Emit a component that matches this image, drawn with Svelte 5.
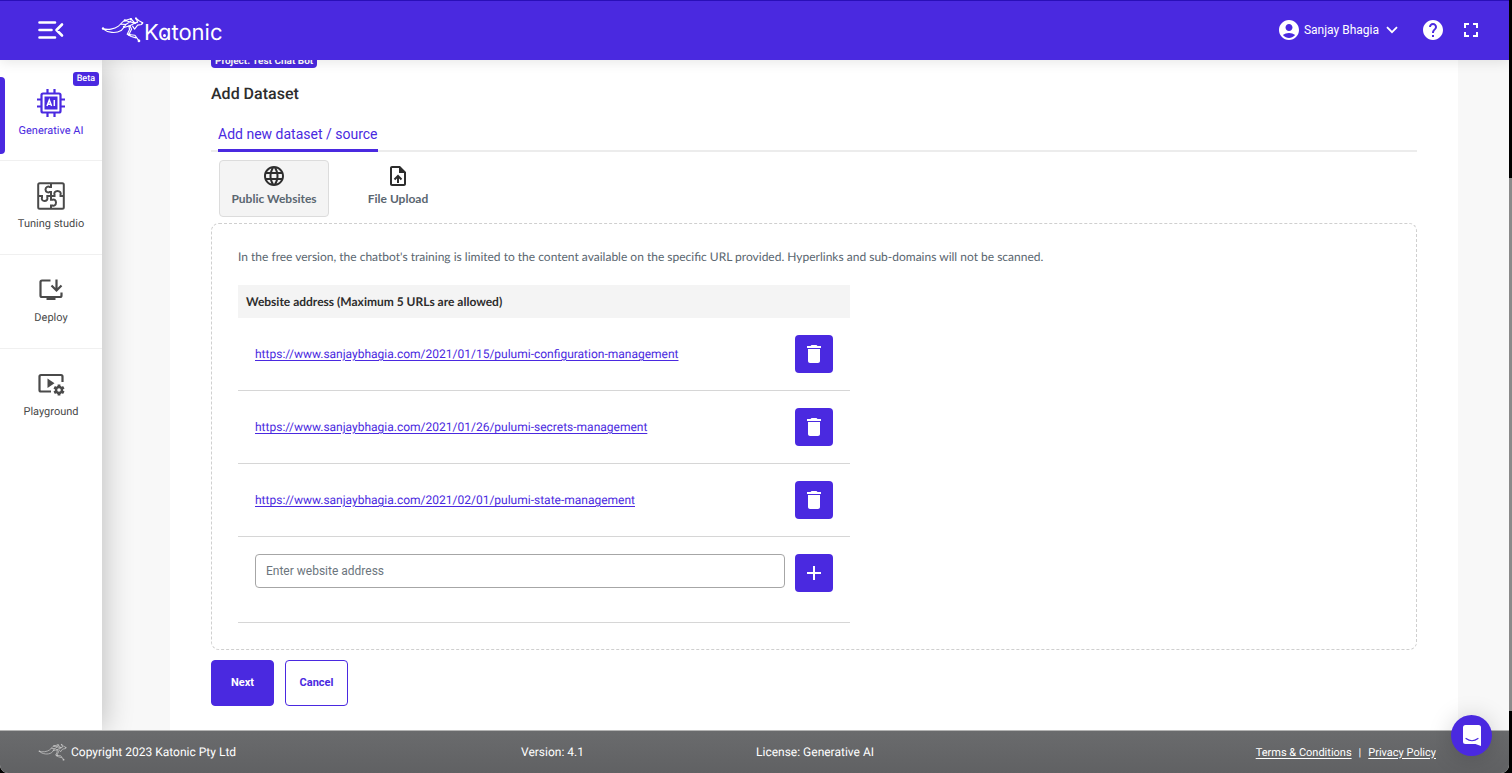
<script>
  let address = $state('');
  let urls = $state([
    'https://www.sanjaybhagia.com/2021/01/15/pulumi-configuration-management',
    'https://www.sanjaybhagia.com/2021/01/26/pulumi-secrets-management',
    'https://www.sanjaybhagia.com/2021/02/01/pulumi-state-management'
  ]);

  function addUrl() {
    if (address.trim() && urls.length < 5) {
      urls.push(address.trim());
      address = '';
    }
  }
</script>

{#snippet kangaroo()}
  <svg class="kangaroo" viewBox="18 18 128 80" fill="none" stroke="currentColor" stroke-linecap="round" stroke-linejoin="round" aria-hidden="true">
    <path stroke-width="3.4" d="M23 55C38 60 58 57 70 48C78 42 80 34 89 31L107 26L119 39L103 35L89 31M24 56C38 68 62 71 78 61L86 52L104 47L119 39M78 42L92 43L107 33M92 43L86 52" />
    <path stroke-width="3.4" d="M119 39L127 36L122 24L131 32L142 38L139 43L127 45L118 57L112 48M104 47L109 57L101 73L119 75L131 92M101 47L103 58L96 72L108 79L122 83" />
    <g fill="currentColor" stroke="none">
      <circle cx="24" cy="55" r="3.5" /><circle cx="89" cy="31" r="3.5" /><circle cx="107" cy="27" r="3.5" />
      <circle cx="86" cy="50" r="3" /><circle cx="119" cy="39" r="3" /><circle cx="122" cy="25" r="3" />
      <circle cx="141" cy="39" r="3" /><circle cx="102" cy="73" r="4" /><circle cx="131" cy="92" r="4" />
    </g>
  </svg>
{/snippet}

<div class="desktop">
  <div class="window">
    <header>
      <button class="icon-btn menu" aria-label="Collapse menu">
        <svg width="26" height="18" viewBox="0 0 26 18" fill="none" stroke="#fff" stroke-width="2.6" stroke-linecap="round" stroke-linejoin="round">
          <path d="M1.5 1.5H17M1.5 9H13.5M1.5 16.500H17M24 3.500L18.500 9L24 14.500" />
        </svg>
      </button>
      <a class="brand" href="#home">
        {@render kangaroo()}
        <span class="wordmark">K<span class="dotted">a</span>tonic</span>
      </a>
      <button class="icon-btn user">
        <svg width="20" height="20" viewBox="2 2 20 20" fill="#fff"><path d="M12 2C6.480 2 2 6.480 2 12s4.480 10 10 10 10-4.480 10-10S17.520 2 12 2zm0 4c1.930 0 3.500 1.570 3.500 3.500S13.930 13 12 13s-3.500-1.570-3.500-3.500S10.070 6 12 6zm0 14c-2.030 0-4.430-.82-6.140-2.880C7.550 15.800 9.680 15 12 15s4.450.8 6.140 2.120C16.430 19.180 14.030 20 12 20z" /></svg>
        <span>Sanjay Bhagia</span>
        <svg width="12" height="8" viewBox="0 0 12 8" fill="none" stroke="#fff" stroke-width="1.800"><path d="M1 1.200L6 6.200L11 1.200" /></svg>
      </button>
      <button class="icon-btn" aria-label="Help">
        <svg width="20" height="20" viewBox="2 2 20 20" fill="#fff"><path d="M12 2C6.480 2 2 6.480 2 12s4.480 10 10 10 10-4.480 10-10S17.520 2 12 2zm1 17h-2v-2h2v2zm2.070-7.750l-.9.920C13.450 12.900 13 13.500 13 15h-2v-.5c0-1.100.45-2.100 1.170-2.830l1.240-1.260c.37-.36.59-.86.59-1.410 0-1.100-.9-2-2-2s-2 .9-2 2H8c0-2.210 1.790-4 4-4s4 1.790 4 4c0 .88-.36 1.680-.93 2.250z" /></svg>
      </button>
      <button class="icon-btn full" aria-label="Full screen">
        <svg width="14" height="14" viewBox="0 0 14 14" fill="none" stroke="#fff" stroke-width="2"><path d="M1 5V1H5M9 1H13V5M13 9V13H9M5 13H1V9" /></svg>
      </button>
    </header>

    <div class="body">
      <nav>
        <a class="item active" href="#generative">
          <span class="beta">Beta</span>
          <svg width="28" height="28" viewBox="0 0 28 28" fill="none" stroke="currentColor" stroke-width="2.200">
            <rect x="4.500" y="4.500" width="19" height="19" rx="1.500" />
            <path d="M10.500 0V4M17.500 0V4M10.500 24V28M17.500 24V28M0 10.500H4M0 17.500H4M24 10.500H28M24 17.500H28" />
            <rect x="7.500" y="7.500" width="13" height="13" fill="currentColor" stroke="none" />
            <path stroke="#fff" stroke-width="1.500" d="M10 17L12.300 11L14.600 17M10.800 15.200H13.800M17.300 11V17" />
          </svg>
          <span>Generative AI</span>
        </a>
        <a class="item" href="#tuning">
          <svg width="28" height="28" viewBox="0 0 28 28" fill="none" stroke="currentColor" stroke-width="2">
            <rect x="1.200" y="1.200" width="25.600" height="25.600" rx="1.500" />
            <path d="M14 1V5H12.500C11.500 3.800 8.500 4.800 8.500 7.500S11.500 11 12.500 10H14V14M27 14H23.500V12.500C24.300 11 23 9 20.500 9S16.800 11 17.500 12.500V14H14M14 27V23.500H15.500C17 24.300 19 23 19 20.500S17 17 15.500 17.800H14V14M1 14H5V15.500C4.300 17.500 5.500 19 7.500 19S11 17.500 10.300 15.500V14H14" />
          </svg>
          <span>Tuning studio</span>
        </a>
        <a class="item" href="#deploy">
          <svg width="28" height="28" viewBox="0 0 28 28" fill="none" stroke="currentColor" stroke-width="2.200">
            <path d="M13.500 4.500H5Q3.500 4.500 3.500 6V19.500Q3.500 21 5 21H23Q24.500 21 24.500 19.500V16.500M19.500 3.500V13.500M14.500 9.500L19.500 14.500L24.500 9.500" />
            <path d="M9.500 20H18.500V24H9.500Z" fill="currentColor" stroke="none" />
          </svg>
          <span>Deploy</span>
        </a>
        <a class="item" href="#playground">
          <svg width="28" height="28" viewBox="0 0 28 28" fill="none" stroke="currentColor" stroke-width="2.200">
            <path d="M14 21.500H4Q2.500 21.500 2.500 20V6.500Q2.500 5 4 5H24Q25.500 5 25.500 6.500V12" />
            <path d="M10.500 8.500V18L17.500 13.200Z" fill="currentColor" stroke="none" />
            <circle cx="22" cy="20" r="3" stroke-width="2.400" />
            <path stroke-width="2.800" d="M22 14.500V17M22 23V25.500M17.200 17.200L19.400 18.500M24.600 21.500L26.800 22.800M17.200 22.800L19.400 21.500M24.600 18.500L26.800 17.200" />
          </svg>
          <span>Playground</span>
        </a>
      </nav>

      <main>
        <section class="sheet">
          <span class="project">Project: Test Chat Bot</span>
          <h1>Add Dataset</h1>
          <div class="tabs"><button class="tab">Add new dataset / source</button></div>
          <div class="sources">
            <button class="source selected">
              <svg width="24" height="24" viewBox="0 0 24 24" fill="#2d2d2d"><path d="M11.990 2C6.470 2 2 6.480 2 12s4.470 10 9.990 10C17.520 22 22 17.520 22 12S17.520 2 11.990 2zm6.930 6h-2.950c-.32-1.250-.78-2.450-1.380-3.560 1.840.63 3.370 1.910 4.330 3.560zM12 4.040c.83 1.200 1.480 2.530 1.910 3.960h-3.820c.43-1.430 1.080-2.760 1.910-3.960zM4.260 14C4.100 13.360 4 12.690 4 12s.1-1.360.26-2h3.380c-.08.66-.14 1.320-.14 2s.06 1.340.14 2H4.260zm.82 2h2.950c.32 1.250.78 2.450 1.380 3.560-1.840-.63-3.370-1.900-4.330-3.560zm2.950-8H5.080c.96-1.660 2.490-2.930 4.330-3.560C8.810 5.550 8.350 6.750 8.030 8zM12 19.960c-.83-1.200-1.480-2.530-1.910-3.960h3.820c-.43 1.430-1.080 2.760-1.910 3.960zM14.340 14H9.660c-.09-.66-.16-1.320-.16-2s.07-1.350.16-2h4.680c.09.65.16 1.320.16 2s-.07 1.340-.16 2zm.25 5.560c.6-1.110 1.060-2.310 1.380-3.560h2.950c-.96 1.650-2.490 2.930-4.330 3.560zM16.360 14c.08-.66.14-1.320.14-2s-.06-1.340-.14-2h3.380c.16.64.26 1.310.26 2s-.1 1.360-.26 2h-3.380z" /></svg>
              <span>Public Websites</span>
            </button>
            <button class="source">
              <svg width="24" height="24" viewBox="0 0 24 24"><path fill="#2d2d2d" d="M14 2H6c-1.100 0-2 .9-2 2v16c0 1.100.89 2 1.990 2H18c1.100 0 2-.9 2-2V8l-6-6zm4 18H6V4h7v5h5v11z" /><path fill="none" stroke="#2d2d2d" stroke-width="2" d="M12 19V12.500M8.500 15.500L12 12L15.500 15.500" /></svg>
              <span>File Upload</span>
            </button>
          </div>

          <div class="panel">
            <p>In the free version, the chatbot's training is limited to the content available on the specific URL provided. Hyperlinks and sub-domains will not be scanned.</p>
            <table>
              <thead>
                <tr><th colspan="2">Website address (Maximum 5 URLs are allowed)</th></tr>
              </thead>
              <tbody>
                {#each urls as url, i}
                  <tr>
                    <td><a href={url}>{url}</a></td>
                    <td class="action">
                      <button class="square" aria-label="Delete address" onclick={() => urls.splice(i, 1)}>
                        <svg width="24" height="24" viewBox="0 0 24 24" fill="#fff"><path d="M6 19c0 1.100.9 2 2 2h8c1.100 0 2-.9 2-2V7H6v12zM19 4h-3.500l-1-1h-5l-1 1H5v2h14V4z" /></svg>
                      </button>
                    </td>
                  </tr>
                {/each}
                <tr class="entry">
                  <td><input type="text" aria-label="Website address" placeholder="Enter website address" bind:value={address} /></td>
                  <td class="action">
                    <button class="square" aria-label="Add address" onclick={addUrl}>
                      <svg width="24" height="24" viewBox="0 0 24 24" fill="#fff"><path d="M19 13h-6v6h-2v-6H5v-2h6V5h2v6h6v2z" /></svg>
                    </button>
                  </td>
                </tr>
              </tbody>
            </table>
          </div>

          <div class="buttons">
            <button class="primary">Next</button>
            <button class="outline">Cancel</button>
          </div>
        </section>
      </main>
    </div>

    <footer>
      <div class="copy">{@render kangaroo()}<span>Copyright 2023 Katonic Pty Ltd</span></div>
      <span class="version">Version: 4.1</span>
      <span class="license">License: Generative AI</span>
      <div class="legal"><a href="#terms">Terms &amp; Conditions</a><span>|</span><a href="#privacy">Privacy Policy</a></div>
    </footer>

    <button class="chat" aria-label="Open chat">
      <svg width="18" height="21" viewBox="0 0 18 21"><path fill="#fff" d="M2.500 0H15.500Q18 0 18 2.500V21L12.500 19H2.500Q0 19 0 16.500V2.500Q0 0 2.500 0Z" /><path fill="none" stroke="#4a29e0" stroke-width="1.200" stroke-linecap="round" d="M3 13.500Q9 18 15 13.500" /></svg>
    </button>
  </div>
  <div class="edge"></div>
</div>

<style>
  :global(body) { background: #000; }
  * { box-sizing: border-box; }
  button, input { font: inherit; }
  button { cursor: pointer; }
  svg { display: block; flex: none; }

  .desktop {
    display: flex;
    height: 100vh;
    font-family: Roboto, "Liberation Sans", sans-serif;
    font-size: 12px;
    color: #2d2d2d;
    text-rendering: geometricPrecision;
  }
  .window {
    position: relative;
    flex: 1;
    min-width: 0;
    display: flex;
    flex-direction: column;
    overflow: hidden;
    background: #f8f8f8;
    border-radius: 0 0 8px 8px;
  }
  .edge {
    width: 3px;
    background: linear-gradient(#000 23%, #8a8a8a 23%, #8a8a8a 92%, #000 92%);
  }

  header {
    position: relative;
    z-index: 2;
    flex: none;
    height: 60px;
    padding: 0 30px 2px 38px;
    display: flex;
    align-items: center;
    background: #4a29e0;
    border-top: 1px solid #2a0fb8;
    box-shadow: 0 2px 12px rgba(0, 0, 0, 0.1);
    color: #fff;
  }
  .icon-btn {
    display: flex;
    align-items: center;
    padding: 0;
    border: 0;
    background: none;
    color: #fff;
  }
  .brand {
    display: flex;
    align-items: center;
    margin: 0 auto 0 37px;
    color: #fff;
    text-decoration: none;
  }
  .brand .kangaroo { width: 43px; height: 27px; }
  .wordmark {
    font-family: Inter, sans-serif;
    font-size: 22px;
    line-height: 28px;
    font-feature-settings: "cv11";
    padding-top: 6px;
  }
  .dotted { position: relative; }
  .dotted::after {
    content: "";
    position: absolute;
    left: 5px;
    bottom: 9px;
    width: 3px;
    height: 3px;
    border-radius: 50%;
    background: #fff;
  }
  .user { gap: 5px; margin-right: 25px; }
  .user span { padding-right: 2px; }
  .full { margin: 0 1px 0 21px; }

  .body { flex: 1; min-height: 0; display: flex; }
  nav {
    position: relative;
    z-index: 1;
    flex: none;
    width: 102px;
    background: #fff;
    box-shadow: 2px 0 28px rgba(0, 0, 0, 0.24);
  }
  .item {
    position: relative;
    height: 94px;
    padding-top: 21px;
    display: flex;
    flex-direction: column;
    align-items: center;
    gap: 6px;
    border-bottom: 1px solid #f0f0f0;
    color: #4a4a4a;
    font-size: 11px;
    line-height: 16px;
    text-decoration: none;
  }
  .item:last-child { border: 0; }
  .active { height: 101px; padding-top: 29px; color: #4a29e0; }
  .active::before {
    content: "";
    position: absolute;
    left: 0;
    top: 17px;
    width: 5px;
    height: 77px;
    border-radius: 0 4px 4px 0;
    background: #4a29e0;
  }
  .beta {
    position: absolute;
    right: 3px;
    top: 12px;
    padding: 0 4px;
    border-radius: 3px;
    background: #4a29e0;
    color: #fff;
    font-size: 9px;
    font-weight: 500;
    line-height: 14px;
  }

  main { flex: 1; min-width: 0; padding: 0 51px 0 68px; }
  .sheet {
    height: 100%;
    padding: 0 41px;
    background: #fff;
    display: flex;
    flex-direction: column;
    align-items: stretch;
  }
  .project {
    align-self: flex-start;
    margin-top: -5px;
    padding: 0 4px;
    border-radius: 4px;
    background: #4a29e0;
    color: #fff;
    font-size: 10px;
    font-weight: 700;
    line-height: 13px;
  }
  h1 { margin: 16px 0 0; font-size: 16px; line-height: 20px; font-weight: 500; }
  .tabs {
    margin-top: 20px;
    padding-left: 7px;
    display: flex;
    border-bottom: 2px solid #ececec;
  }
  .tab {
    margin-bottom: -2px;
    padding: 0 0 5px;
    border: 0;
    border-bottom: 3px solid #4a29e0;
    background: none;
    color: #4a29e0;
    font-size: 14px;
    line-height: 20px;
  }
  .sources { display: flex; gap: 14px; padding: 8px 8px 6px; }
  .source {
    width: 110px;
    height: 57px;
    padding: 3px 0 0;
    display: flex;
    flex-direction: column;
    align-items: center;
    gap: 2px;
    border: 1px solid transparent;
    border-radius: 4px;
    background: none;
    color: #5a6670;
    font-family: Lato, sans-serif;
    font-size: 12px;
    line-height: 18px;
    font-weight: 700;
  }
  .selected { background: #f4f4f4; border-color: #dcdcdc; }

  .panel { padding: 24px 26px 26px; border: 1px dashed #cfcfcf; border-radius: 8px; }
  p {
    margin: 0 0 19px;
    color: #5a6670;
    font-family: Lato, sans-serif;
    font-size: 12px;
    line-height: 18px;
  }
  table { width: 100%; max-width: 612px; border-collapse: separate; border-spacing: 0; }
  th {
    height: 33px;
    padding: 0 8px;
    background: #f4f4f4;
    font-family: Lato, sans-serif;
    font-size: 12px;
    font-weight: 700;
    text-align: left;
  }
  td { height: 73px; padding: 17px 0 17px 17px; border-bottom: 1px solid #d6d6d6; }
  td a { color: #4a29e0; text-underline-offset: 2px; }
  .action { width: 65px; padding: 17px 17px 17px 10px; }
  .entry td { height: 86px; padding-bottom: 30px; vertical-align: top; }
  input {
    display: block;
    width: 100%;
    height: 34px;
    padding: 0 10px;
    border: 1px solid #a6a6a6;
    border-radius: 4px;
    background: #fff;
  }
  input::placeholder { color: #6c757d; opacity: 1; }
  .square {
    display: grid;
    place-items: center;
    width: 38px;
    height: 38px;
    padding: 0;
    border: 0;
    border-radius: 4px;
    background: #4a29e0;
  }

  .buttons { display: flex; gap: 11px; padding-top: 10px; }
  .buttons button {
    width: 63px;
    height: 46px;
    padding: 0 0 2px;
    border: 1px solid #4a29e0;
    border-radius: 4px;
    font-size: 11px;
    font-weight: 700;
  }
  .primary { background: #4a29e0; color: #fff; }
  .outline { background: #fff; color: #4a29e0; }

  footer {
    position: relative;
    z-index: 2;
    flex: none;
    height: 43px;
    padding: 0 73px 0 38px;
    display: grid;
    grid-template-columns: 483px 235px 1fr auto;
    align-items: center;
    background: linear-gradient(#6a6b6d, #606163);
    border-top: 1px solid #b4b4b4;
    color: #fff;
  }
  .copy { display: flex; align-items: center; gap: 4px; }
  .copy .kangaroo { width: 29px; height: 18px; color: #c4c4c4; }
  .legal { display: flex; gap: 7px; font-size: 11px; }
  .legal a { color: #fff; text-underline-offset: 2px; }

  .chat {
    position: absolute;
    z-index: 3;
    right: 17px;
    bottom: 17px;
    width: 41px;
    height: 41px;
    padding: 0;
    display: grid;
    place-items: center;
    border: 0;
    border-radius: 50%;
    background: #4a29e0;
    box-shadow: 0 2px 24px rgba(0, 0, 0, 0.18);
  }
</style>
